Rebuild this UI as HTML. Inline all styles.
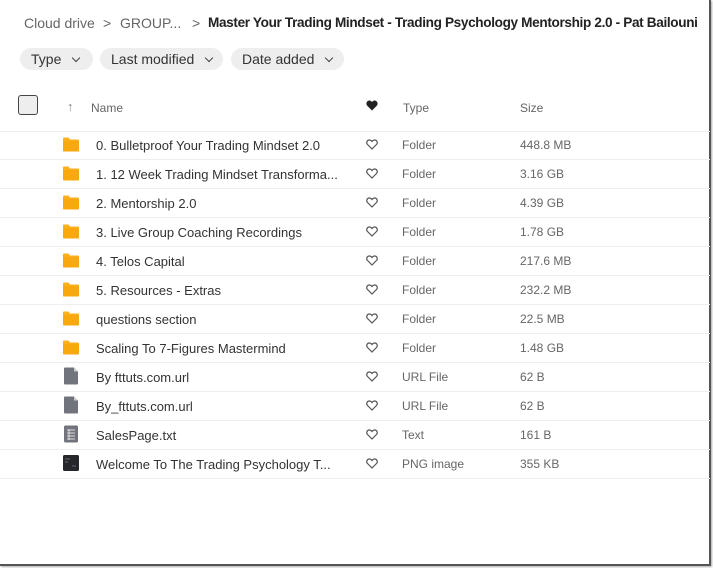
<!DOCTYPE html>
<html><head><style>
*{margin:0;padding:0;box-sizing:border-box}
body{width:713px;height:568px;background:#fff;font-family:"Liberation Sans",sans-serif;position:relative;overflow:hidden}
.frame{position:absolute;left:0;top:0;width:711px;height:566px;border-right:2px solid #555;border-bottom:2px solid #555;box-shadow:1px 1px 2px #aaa}
.bc{position:absolute;top:15px;left:24px;height:20px;font-size:14px;color:#666;white-space:nowrap;width:684px;overflow:hidden}
.bc span{position:absolute;top:0}
.bc b{position:absolute;left:184px;top:0;color:#222;font-size:13.6px;letter-spacing:-0.35px}
.chip{position:absolute;top:48px;height:22px;border-radius:11px;background:#eee;font-size:14px;color:#333;padding:3px 0 0 11px}
.chev{display:inline-block;width:6px;height:6px;border-right:1.4px solid #444;border-bottom:1.4px solid #444;transform:rotate(45deg);margin-left:12px;position:relative;top:-3px}
.hdr{position:absolute;top:95px;left:0;width:710px;height:37px;border-bottom:1px solid #eee;font-size:12px;color:#666}
.cb{position:absolute;left:18px;top:0;width:20px;height:20px;border:1.5px solid #444;border-radius:3px;background:#eee}
.row{position:absolute;left:0;width:710px;height:29px;border-bottom:1px solid #eee;font-size:13px;color:#333}
.row .n{position:absolute;left:96px;top:7px}
.row .t{position:absolute;left:402px;top:7px;font-size:12px;color:#666}
.row .s{position:absolute;left:520px;top:7px;font-size:12px;color:#666}
.row .h{position:absolute;left:366px;top:8px}
.ic{position:absolute;left:62px;top:6px}
</style></head><body>
<div class="frame"></div>
<div class="bc"><span style="left:0">Cloud drive</span><span style="left:79px">&gt;</span><span style="left:96px">GROUP...</span><span style="left:168px">&gt;</span><b>Master Your Trading Mindset - Trading Psychology Mentorship 2.0 - Pat Bailouni</b></div>
<div class="chip" style="left:20px;width:73px">Type<i class="chev"></i></div>
<div class="chip" style="left:100px;width:123px">Last modified<i class="chev"></i></div>
<div class="chip" style="left:231px;width:113px">Date added<i class="chev"></i></div>
<div class="hdr">
<div class="cb"></div>
<span style="position:absolute;left:67px;top:4px;font-size:13px;color:#888">↑</span>
<span style="position:absolute;left:91px;top:6px">Name</span>
<svg style="position:absolute;left:366px;top:5px" width="12" height="11" viewBox="0 0 12 11"><path d="M6 10.5L1 5.5C-.5 3.5 1 .5 3.3.5 4.6.5 5.5 1.3 6 2 6.5 1.3 7.4.5 8.7.5 11 .5 12.5 3.5 11 5.5Z" fill="#222"/></svg>
<span style="position:absolute;left:403px;top:6px">Type</span>
<span style="position:absolute;left:520px;top:6px">Size</span>
</div>
<div id="rows"></div>
<script>
const R=[["f","0. Bulletproof Your Trading Mindset 2.0","Folder","448.8 MB"],["f","1. 12 Week Trading Mindset Transforma...","Folder","3.16 GB"],["f","2. Mentorship 2.0","Folder","4.39 GB"],["f","3. Live Group Coaching Recordings","Folder","1.78 GB"],["f","4. Telos Capital","Folder","217.6 MB"],["f","5. Resources - Extras","Folder","232.2 MB"],["f","questions section","Folder","22.5 MB"],["f","Scaling To 7-Figures Mastermind","Folder","1.48 GB"],["u","By fttuts.com.url","URL File","62 B"],["u","By_fttuts.com.url","URL File","62 B"],["t","SalesPage.txt","Text","161 B"],["p","Welcome To The Trading Psychology T...","PNG image","355 KB"]];
let h="";
R.forEach((r,i)=>{
let ic="";
if(r[0]=="f")ic='<svg class="ic" width="18" height="15" viewBox="0 0 18 15"><path d="M1 1.5Q1 .5 2 .5H6.5L8 2.5H16Q17 2.5 17 3.5V13.5Q17 14.5 16 14.5H2Q1 14.5 1 13.5Z" fill="#fbb01c"/><path d="M1 4H17V13.5Q17 14.5 16 14.5H2Q1 14.5 1 13.5Z" fill="#f9a80e"/></svg>';
else if(r[0]=="u")ic='<svg class="ic" style="top:4px" width="18" height="18" viewBox="0 0 18 18"><path d="M2 1.5Q2 .5 3 .5H12L16 4.5V16.5Q16 17.5 15 17.5H3Q2 17.5 2 16.5Z" fill="#71747c"/><path d="M12 .5V4.5H16Z" fill="#ccc"/></svg>';
else if(r[0]=="t")ic='<svg class="ic" style="top:4px" width="18" height="18" viewBox="0 0 18 18"><rect x="2" y=".5" width="14" height="17" rx="1.5" fill="#71747c"/><path d="M5 5H13M5 8H13M5 11H13M5 14H13M7 4V15" stroke="#ddd" stroke-width="1"/></svg>';
else ic='<svg class="ic" style="top:4px" width="18" height="18" viewBox="0 0 18 18"><rect x="1" y="1" width="16" height="16" rx="1.5" fill="#25272b"/><path d="M3 5H8M3 8H6M10 12H14" stroke="#667" stroke-width="1"/></svg>';
h+=`<div class="row" style="top:${131+i*29}px">${ic}<span class="n">${r[1]}</span><svg class="h" width="12" height="11" viewBox="0 0 12 11"><path d="M6 10L1.4 5.4C0 3.8 1 1 3.3 1 4.6 1 5.5 1.8 6 2.5 6.5 1.8 7.4 1 8.7 1 11 1 12 3.8 10.6 5.4Z" fill="none" stroke="#555" stroke-width="1.2"/></svg><span class="t">${r[2]}</span><span class="s">${r[3]}</span></div>`;
});
document.getElementById("rows").innerHTML=h;
</script>
</body></html>
